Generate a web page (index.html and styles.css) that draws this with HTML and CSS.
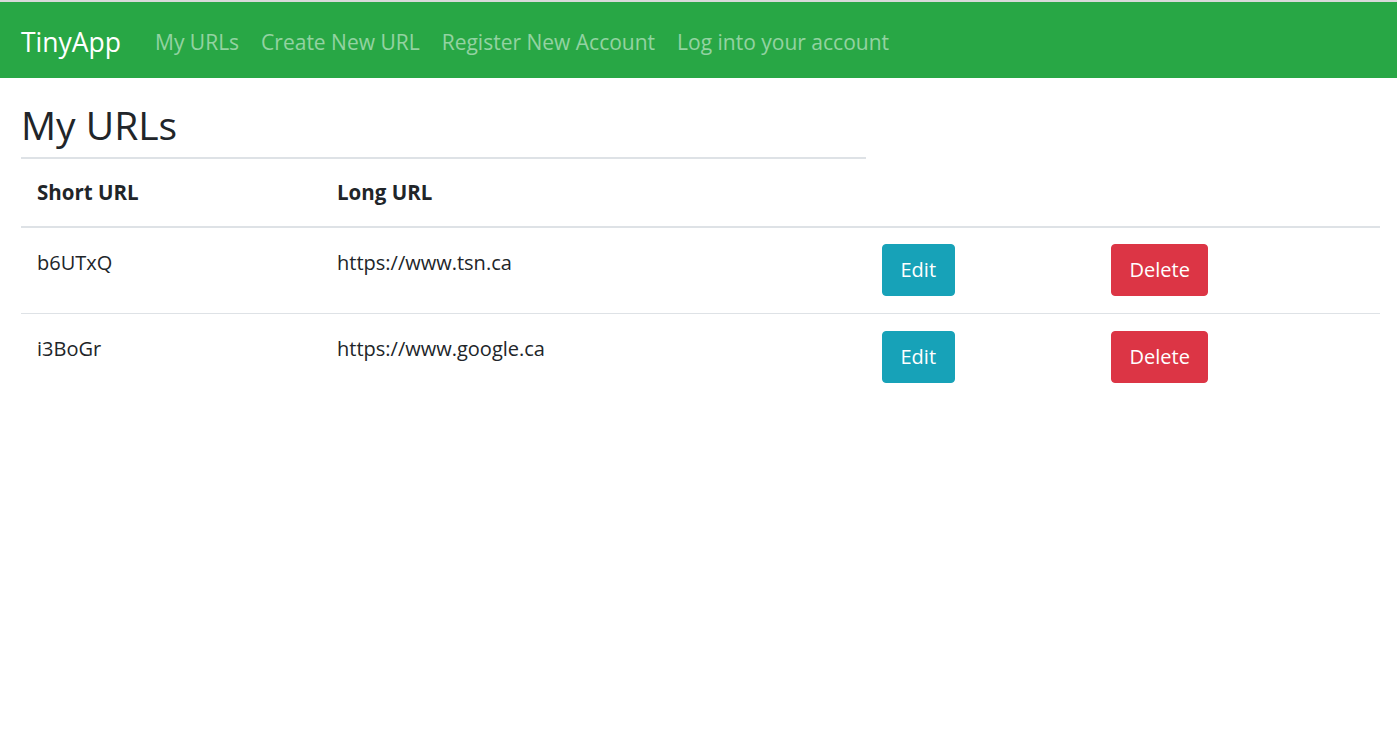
FILE: index.html
```html
<!DOCTYPE html>
<html lang="en">
<head>
<meta charset="utf-8">
<title>TinyApp</title>
<link rel="stylesheet" href="styles.css">
</head>
<body>
<nav class="navbar">
  <a class="brand" href="#">TinyApp</a>
  <div class="nav-links">
    <a class="nav-link" href="#">My URLs</a>
    <a class="nav-link" href="#">Create New URL</a>
    <a class="nav-link" href="#">Register New Account</a>
    <a class="nav-link" href="#">Log into your account</a>
  </div>
</nav>
<main class="main">
  <h1 class="title">My URLs</h1>
  <table class="urls">
    <colgroup>
      <col class="c1"><col class="c2"><col class="c3"><col class="c4">
    </colgroup>
    <thead>
      <tr>
        <th class="top">Short URL</th>
        <th class="top">Long URL</th>
        <th></th>
        <th></th>
      </tr>
    </thead>
    <tbody>
      <tr>
        <td class="txt">b6UTxQ</td>
        <td class="txt">https://www.tsn.ca</td>
        <td><button class="btn btn-edit">Edit</button></td>
        <td><button class="btn btn-delete">Delete</button></td>
      </tr>
      <tr>
        <td class="txt">i3BoGr</td>
        <td class="txt">https://www.google.ca</td>
        <td><button class="btn btn-edit">Edit</button></td>
        <td><button class="btn btn-delete">Delete</button></td>
      </tr>
    </tbody>
  </table>
</main>
</body>
</html>
```
FILE: styles.css
```css
* { box-sizing: border-box; }
html, body {
  margin: 0;
  padding: 0;
  background: #fff;
}
body {
  font-family: "Open Sans", "Noto Sans", sans-serif;
  color: #212529;
  font-size: 20px;
  line-height: 30px;
  border-top: 2px solid #d9d9d9;
}
.navbar {
  background: #28a745;
  height: 76px;
  display: flex;
  align-items: center;
  padding: 3px 21px 0;
}
.brand {
  color: #fff;
  text-decoration: none;
  font-size: 26.5px;
  margin-right: 23px;
}
.nav-links {
  display: flex;
}
.nav-link {
  color: rgba(255, 255, 255, 0.5);
  text-decoration: none;
  font-size: 21px;
  padding: 0 11px;
}
.main {
  padding: 0 17px 0 21px;
}
.title {
  font-size: 39px;
  font-weight: 400;
  line-height: 50px;
  margin: 0;
  padding-top: 22px;
  height: 79px;
}
.urls {
  width: 100%;
  border-collapse: collapse;
  table-layout: fixed;
}
.c1 { width: 300px; }
.c2 { width: 545px; }
.c3 { width: 229px; }
.c4 { width: 285px; }
.urls th {
  text-align: left;
  font-weight: 700;
  font-size: 20.5px;
  padding: 18px 16px 19px;
  line-height: 30px;
  border-bottom: 2px solid #dee2e6;
  vertical-align: bottom;
}
.urls th.top {
  border-top: 2px solid #dee2e6;
}
.urls td {
  padding: 16px 16px 17px;
  vertical-align: top;
  border-bottom: 1px solid #dee2e6;
}
.urls tbody tr + tr td {
  padding-top: 17px;
}
.urls td.txt {
  padding-top: 20px;
}
.urls tbody tr:last-child td {
  border-bottom: none;
}
.btn {
  font-family: inherit;
  font-size: 20px;
  line-height: 30px;
  height: 52px;
  padding: 10px 17.5px;
  border: 1px solid transparent;
  border-radius: 4px;
  color: #fff;
  cursor: pointer;
}
.btn-edit {
  background: #17a2b8;
  border-color: #17a2b8;
}
.btn-delete {
  background: #dc3545;
  border-color: #dc3545;
}
```
